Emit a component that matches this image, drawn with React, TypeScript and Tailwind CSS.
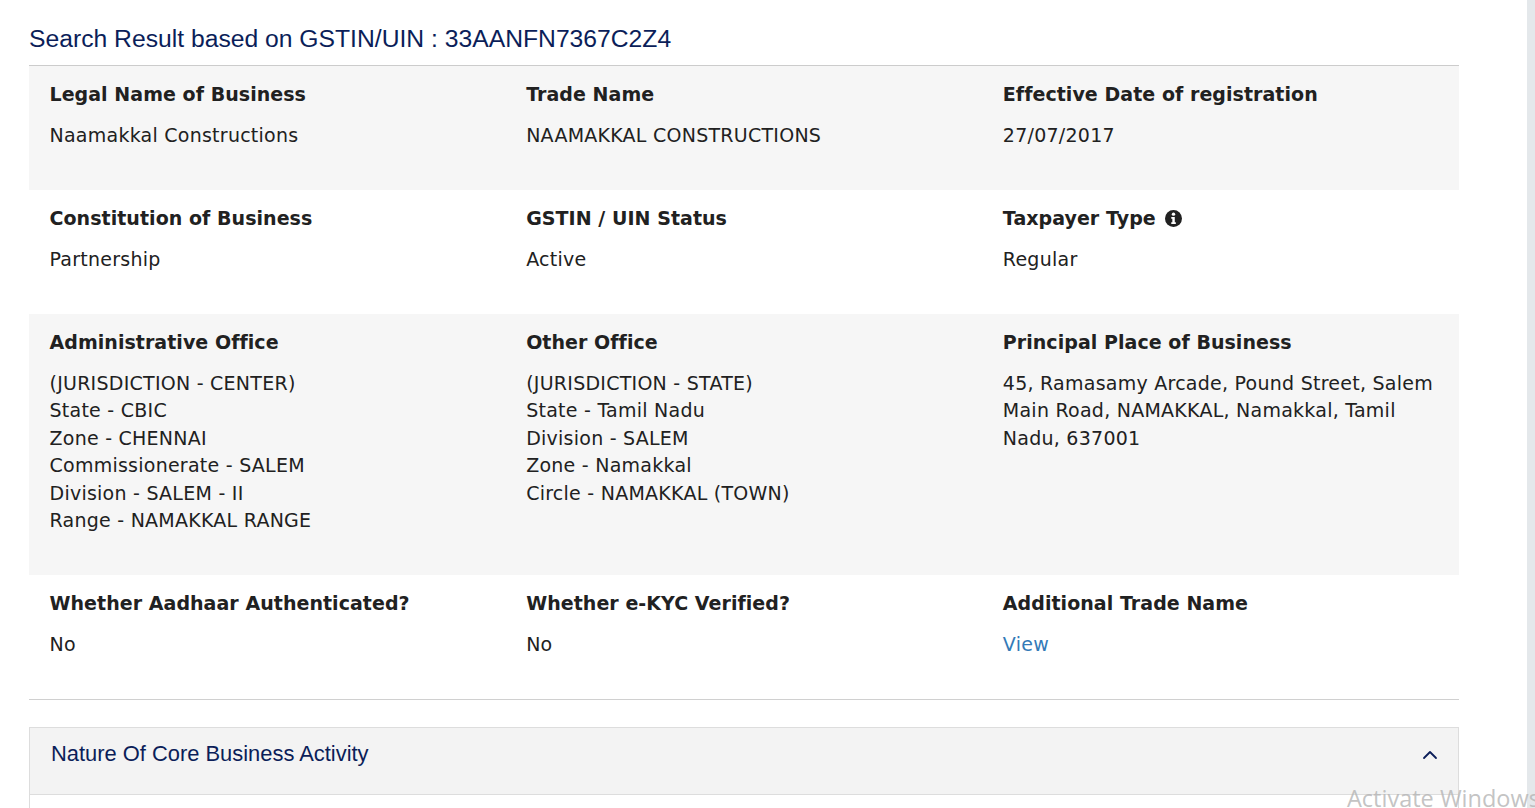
import { ChevronUp } from "lucide-react";

function InfoIcon() {
  return (
    <svg viewBox="0 0 16 16" className="inline-block w-[17px] h-[17px] ml-[3px] align-[-2px]">
      <circle cx="8" cy="8" r="8" fill="#212121" />
      <circle cx="8" cy="3.9" r="1.6" fill="#fff" />
      <path d="M5.9 6.5h3.3v5h1v1.7H5.9v-1.7h1v-3.3h-1z" fill="#fff" />
    </svg>
  );
}

interface FieldProps {
  label: React.ReactNode;
  lines: string[];
  link?: boolean;
}

function Field({ label, lines, link }: FieldProps) {
  return (
    <div className="pl-[20.5px] pr-[20px]">
      <p className="font-bold h-[27px] leading-[27px] tracking-[0.05px]">{label}</p>
      <div className={`mt-[14px] text-[19px] tracking-[0.25px] ${link ? "text-[#337ab7]" : ""}`}>
        {lines.map((l) => (
          <p key={l}>{l}</p>
        ))}
      </div>
    </div>
  );
}

const rows: { bg: string; height: string; fields: FieldProps[] }[] = [
  {
    bg: "bg-[#f6f6f6]",
    height: "h-[124px]",
    fields: [
      { label: "Legal Name of Business", lines: ["Naamakkal Constructions"] },
      { label: "Trade Name", lines: ["NAAMAKKAL CONSTRUCTIONS"] },
      { label: "Effective Date of registration", lines: ["27/07/2017"] },
    ],
  },
  {
    bg: "bg-white",
    height: "h-[124px]",
    fields: [
      { label: "Constitution of Business", lines: ["Partnership"] },
      { label: "GSTIN / UIN Status", lines: ["Active"] },
      {
        label: (
          <>
            Taxpayer Type <InfoIcon />
          </>
        ),
        lines: ["Regular"],
      },
    ],
  },
  {
    bg: "bg-[#f6f6f6]",
    height: "h-[261px]",
    fields: [
      {
        label: "Administrative Office",
        lines: [
          "(JURISDICTION - CENTER)",
          "State - CBIC",
          "Zone - CHENNAI",
          "Commissionerate - SALEM",
          "Division - SALEM - II",
          "Range - NAMAKKAL RANGE",
        ],
      },
      {
        label: "Other Office",
        lines: [
          "(JURISDICTION - STATE)",
          "State - Tamil Nadu",
          "Division - SALEM",
          "Zone - Namakkal",
          "Circle - NAMAKKAL (TOWN)",
        ],
      },
      {
        label: "Principal Place of Business",
        lines: ["45, Ramasamy Arcade, Pound Street, Salem Main Road, NAMAKKAL, Namakkal, Tamil Nadu, 637001"],
      },
    ],
  },
  {
    bg: "bg-white",
    height: "h-[124px]",
    fields: [
      { label: "Whether Aadhaar Authenticated?", lines: ["No"] },
      { label: "Whether e-KYC Verified?", lines: ["No"] },
      { label: "Additional Trade Name", lines: ["View"], link: true },
    ],
  },
];

export default function App() {
  return (
    <div className="relative h-screen overflow-hidden bg-white flex">
      <main className="flex-1 pl-[29px] pr-[68px] pt-[25px]">
        <h4 className="font-['Liberation_Sans',Arial,sans-serif] text-[24.7px] leading-[28px] text-[#0b1e59] pb-[12px] border-b border-[#cccccc]">
          Search Result based on GSTIN/UIN : 33AANFN7367C2Z4
        </h4>
        <div className="font-['DejaVu_Sans',Verdana,sans-serif] text-[19px] leading-[27.4px] text-[#212121]">
          {rows.map((row, i) => (
            <div key={i} className={`grid grid-cols-3 pt-[15px] ${row.bg} ${row.height}`}>
              {row.fields.map((f, j) => (
                <Field key={j} {...f} />
              ))}
            </div>
          ))}
        </div>
        <div className="border-t border-[#d0d0d0] pt-[27px]">
          <div className="border border-[#dddddd] h-[200px]">
            <div className="h-[67px] bg-[#f3f3f3] border-b border-[#dddddd] flex justify-between pl-[21px] pr-[16px] pt-[11px]">
              <span className="font-['Liberation_Sans',Arial,sans-serif] text-[21.9px] leading-[30px] text-[#0b1e59]">
                Nature Of Core Business Activity
              </span>
              <ChevronUp className="w-[24px] h-[24px] mt-[4px] text-[#0b1e59]" strokeWidth={1.8} />
            </div>
          </div>
        </div>
      </main>
      <div className="w-[8px] bg-[#e4e8eb]" />
      {/* Watermark */}
      <div className="absolute left-[1347px] top-[782px] whitespace-nowrap font-['Open_Sans',sans-serif] text-[23.5px] leading-[32px] text-[#b4b4b4]/80">
        Activate Windows
      </div>
    </div>
  );
}
